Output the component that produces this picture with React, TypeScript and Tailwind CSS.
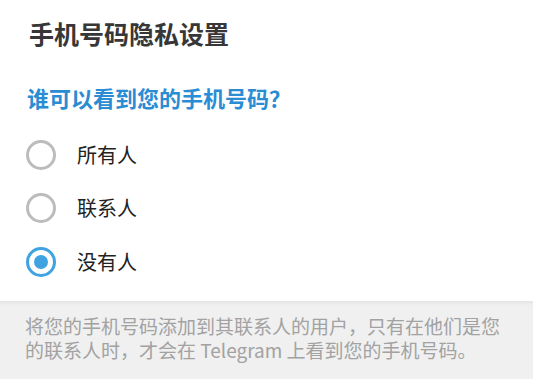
import { useState } from 'react'

const options = ['所有人', '联系人', '没有人']

const Radio = ({ checked }: { checked: boolean }) =>
  checked ? (
    <span className="flex h-[30px] w-[30px] shrink-0 items-center justify-center rounded-full border-[3px] border-[#3fa3e2]">
      <span className="h-[14px] w-[14px] rounded-full bg-[#3fa3e2]" />
    </span>
  ) : (
    <span className="h-[30px] w-[30px] shrink-0 rounded-full border-[3px] border-[#bcbcbc]" />
  )

export default function App() {
  const [selected, setSelected] = useState(2)

  return (
    <div
      className="h-[379px] w-[533px] overflow-hidden bg-white"
      style={{ fontFamily: '"Noto Sans CJK SC", "Noto Sans", sans-serif' }}
    >
      <h1 className="px-[29px] pt-[17px] text-[25px] font-bold leading-[32px] text-[#373737]">
        手机号码隐私设置
      </h1>

      <h2 className="mt-[33px] px-[27px] text-[22px] font-bold leading-[30px] text-[#2a8dd3]">
        谁可以看到您的手机号码？
      </h2>

      <div className="mt-[16px]">
        {options.map((label, i) => (
          <div
            key={label}
            onClick={() => setSelected(i)}
            className="flex h-[53.5px] cursor-pointer items-center gap-[21px] px-[26px]"
          >
            <Radio checked={selected === i} />
            <span className="text-[20px] leading-[28px] text-[#222222]">{label}</span>
          </div>
        ))}
      </div>

      <div className="mt-[12px] h-[120px] bg-[#f0f0f0] px-[25px] pt-[13px] shadow-[inset_0_4px_4px_-3px_rgba(0,0,0,0.08)]">
        <p className="text-[19px] leading-[24px] text-[#a2a2a2]">
          将您的手机号码添加到其联系人的用户，只有在他们是您的联系人时，才会在 Telegram 上看到您的手机号码。
        </p>
      </div>
    </div>
  )
}
